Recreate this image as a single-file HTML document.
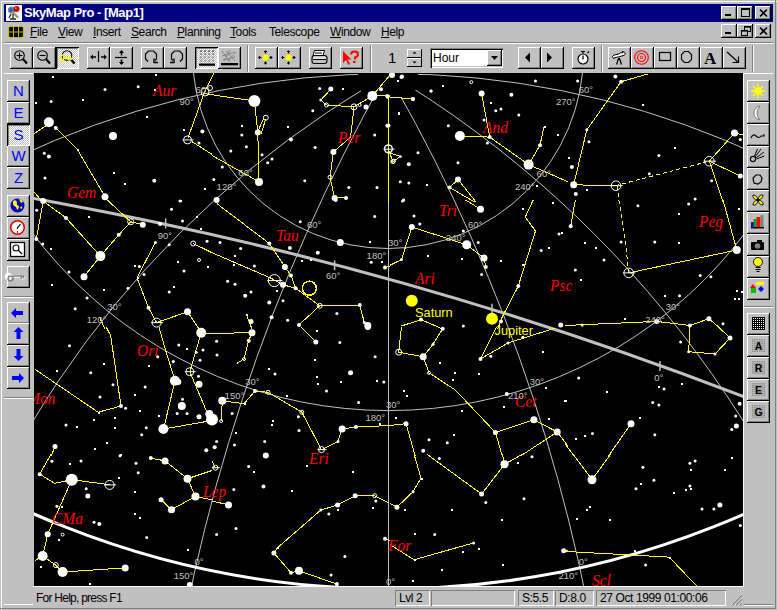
<!DOCTYPE html><html><head><meta charset="utf-8"><style>
*{margin:0;padding:0;box-sizing:border-box}
html,body{width:777px;height:610px;overflow:hidden;background:#c0c0c0;font-family:"Liberation Sans",sans-serif;font-size:12px;color:#000}
.a{position:absolute}
.b{position:absolute;width:23px;height:22px;background:#c0c0c0;box-shadow:inset -1px -1px #000,inset 1px 1px #fff,inset -2px -2px #808080}
.p{position:absolute;width:23px;height:22px;background-color:#c0c0c0;background-image:linear-gradient(45deg,#fff 25%,transparent 25%,transparent 75%,#fff 75%),linear-gradient(45deg,#fff 25%,transparent 25%,transparent 75%,#fff 75%);background-size:2px 2px;background-position:0 0,1px 1px;box-shadow:inset 1px 1px #000,inset -1px -1px #fff,inset 2px 2px #808080}
.tb{position:absolute;width:16px;height:14px;background:#c0c0c0;box-shadow:inset -1px -1px #000,inset 1px 1px #fff,inset -2px -2px #808080}
.m{position:absolute;top:25px;font-size:12px;line-height:15px;letter-spacing:-0.4px}
.u{text-decoration:underline}
.sp{position:absolute;top:590px;height:16px;box-shadow:inset 1px 1px #808080,inset -1px -1px #fff;padding:0 0 0 4px;font-size:12px;line-height:16px;letter-spacing:-0.4px}
svg{position:absolute;left:0;top:0}

</style></head><body>
<div class="a" style="left:1px;top:1px;width:776px;height:609px;border-top:1px solid #fff;border-left:1px solid #fff"></div>
<div class="a" style="left:4px;top:4px;width:769px;height:18px;background:#000080"></div>
<div class="a" style="left:24px;top:5px;color:#fff;font-weight:bold;font-size:13px;line-height:16px;letter-spacing:-0.45px">SkyMap Pro - [Map1]</div>
<div class="tb" style="left:721px;top:6px"></div>
<div class="tb" style="left:721px;top:24px"></div>
<div class="tb" style="left:737px;top:6px"></div>
<div class="tb" style="left:737px;top:24px"></div>
<div class="tb" style="left:755px;top:6px"></div>
<div class="tb" style="left:755px;top:24px"></div>
<div class="m" style="left:30px"><span class="u">F</span>ile</div>
<div class="m" style="left:58px"><span class="u">V</span>iew</div>
<div class="m" style="left:93px"><span class="u">I</span>nsert</div>
<div class="m" style="left:131px"><span class="u">S</span>earch</div>
<div class="m" style="left:177px"><span class="u">P</span>lanning</div>
<div class="m" style="left:230px"><span class="u">T</span>ools</div>
<div class="m" style="left:269px"><span class="u"></span>Telescope</div>
<div class="m" style="left:330px"><span class="u">W</span>indow</div>
<div class="m" style="left:381px"><span class="u">H</span>elp</div>
<div class="a" style="left:4px;top:42px;width:769px;height:1px;background:#808080"></div>
<div class="a" style="left:4px;top:43px;width:769px;height:1px;background:#fff"></div>
<div class="b" style="left:10px;top:47px"></div>
<div class="b" style="left:33px;top:47px"></div>
<div class="b" style="left:87px;top:47px"></div>
<div class="b" style="left:110px;top:47px"></div>
<div class="b" style="left:141px;top:47px"></div>
<div class="b" style="left:164px;top:47px"></div>
<div class="b" style="left:218px;top:47px"></div>
<div class="b" style="left:255px;top:47px"></div>
<div class="b" style="left:278px;top:47px"></div>
<div class="b" style="left:309px;top:47px"></div>
<div class="b" style="left:340px;top:47px"></div>
<div class="b" style="left:518px;top:47px"></div>
<div class="b" style="left:541px;top:47px"></div>
<div class="b" style="left:572px;top:47px"></div>
<div class="b" style="left:608px;top:47px"></div>
<div class="b" style="left:631px;top:47px"></div>
<div class="b" style="left:654px;top:47px"></div>
<div class="b" style="left:677px;top:47px"></div>
<div class="b" style="left:700px;top:47px"></div>
<div class="b" style="left:723px;top:47px"></div>
<div class="p" style="left:56px;top:47px"></div>
<div class="p" style="left:195px;top:47px"></div>
<div class="a" style="left:247px;top:45px;width:1px;height:27px;background:#808080"></div><div class="a" style="left:248px;top:45px;width:1px;height:27px;background:#fff"></div>
<div class="a" style="left:370px;top:45px;width:1px;height:27px;background:#808080"></div><div class="a" style="left:371px;top:45px;width:1px;height:27px;background:#fff"></div>
<div class="a" style="left:601px;top:45px;width:1px;height:27px;background:#808080"></div><div class="a" style="left:602px;top:45px;width:1px;height:27px;background:#fff"></div>
<div class="a" style="left:752px;top:45px;width:1px;height:27px;background:#808080"></div><div class="a" style="left:753px;top:45px;width:1px;height:27px;background:#fff"></div>
<div class="a" style="left:407px;top:49px;width:15px;height:9px;box-shadow:inset -1px -1px #000,inset 1px 1px #fff;background:#c0c0c0"></div>
<div class="a" style="left:407px;top:58px;width:15px;height:9px;box-shadow:inset -1px -1px #000,inset 1px 1px #fff;background:#c0c0c0"></div>
<div class="a" style="left:388px;top:50px;font-size:15px;line-height:16px;color:#000">1</div>
<div class="a" style="left:430px;top:48px;width:73px;height:20px;background:#fff;box-shadow:inset 1px 1px #808080,inset 2px 2px #000,inset -1px -1px #fff,inset -2px -2px #c0c0c0"></div>
<div class="a" style="left:487px;top:50px;width:15px;height:16px;background:#c0c0c0;box-shadow:inset -1px -1px #000,inset 1px 1px #fff,inset -2px -2px #808080"></div>
<div class="a" style="left:433px;top:51px;font-size:12px;line-height:14px">Hour</div>
<div class="a" style="left:4px;top:73px;width:29px;height:1px;background:#fff"></div>
<div class="a" style="left:743px;top:73px;width:30px;height:1px;background:#fff"></div>
<div class="b" style="left:7px;top:80px;font-size:15px;line-height:22px;text-align:center;color:#0000ff">N</div>
<div class="b" style="left:7px;top:102px;font-size:15px;line-height:22px;text-align:center;color:#0000ff">E</div>
<div class="b" style="left:7px;top:145px;font-size:15px;line-height:22px;text-align:center;color:#0000ff">W</div>
<div class="b" style="left:7px;top:167px;font-size:15px;line-height:22px;text-align:center;color:#0000ff">Z</div>
<div class="b" style="left:7px;top:195px;font-size:15px;line-height:22px;text-align:center;color:#0000ff"></div>
<div class="b" style="left:7px;top:217px;font-size:15px;line-height:22px;text-align:center;color:#0000ff"></div>
<div class="b" style="left:7px;top:239px;font-size:15px;line-height:22px;text-align:center;color:#0000ff"></div>
<div class="b" style="left:7px;top:266px;font-size:15px;line-height:22px;text-align:center;color:#0000ff"></div>
<div class="b" style="left:7px;top:302px;font-size:15px;line-height:22px;text-align:center;color:#0000ff"></div>
<div class="b" style="left:7px;top:323px;font-size:15px;line-height:22px;text-align:center;color:#0000ff"></div>
<div class="b" style="left:7px;top:345px;font-size:15px;line-height:22px;text-align:center;color:#0000ff"></div>
<div class="b" style="left:7px;top:367px;font-size:15px;line-height:22px;text-align:center;color:#0000ff"></div>
<div class="p" style="left:7px;top:124px;font-size:15px;line-height:22px;text-align:center;color:#0000ff">S</div>
<div class="b" style="left:747px;top:80px"></div>
<div class="b" style="left:747px;top:102px"></div>
<div class="b" style="left:747px;top:124px"></div>
<div class="b" style="left:747px;top:146px"></div>
<div class="b" style="left:747px;top:168px"></div>
<div class="b" style="left:747px;top:190px"></div>
<div class="b" style="left:747px;top:212px"></div>
<div class="b" style="left:747px;top:234px"></div>
<div class="b" style="left:747px;top:256px"></div>
<div class="b" style="left:747px;top:278px"></div>
<div class="b" style="left:747px;top:313px"></div>
<div class="b" style="left:747px;top:335px"></div>
<div class="b" style="left:747px;top:357px"></div>
<div class="b" style="left:747px;top:379px"></div>
<div class="b" style="left:747px;top:401px"></div>
<div class="a" style="left:4px;top:296px;width:29px;height:1px;background:#808080"></div><div class="a" style="left:4px;top:297px;width:29px;height:1px;background:#fff"></div>
<div class="a" style="left:4px;top:397px;width:29px;height:1px;background:#808080"></div><div class="a" style="left:4px;top:398px;width:29px;height:1px;background:#fff"></div>
<div class="a" style="left:744px;top:306px;width:29px;height:1px;background:#808080"></div><div class="a" style="left:744px;top:307px;width:29px;height:1px;background:#fff"></div>
<div class="a" style="left:4px;top:604px;width:29px;height:1px;background:#fff"></div>
<div class="a" style="left:744px;top:605px;width:29px;height:1px;background:#fff"></div>
<div class="a" style="left:34px;top:73px;width:709px;height:513px;background:#000;overflow:hidden">
<svg width="709" height="513" viewBox="34 73 709 513" style="position:static;display:block" font-family="Liberation Sans">
<g fill="none" stroke="#c0c0c0" stroke-width="1">
<clipPath id="cg1"><rect x="0" y="0" width="358" height="600"/><rect x="418" y="0" width="400" height="600"/></clipPath>
<circle cx="390.2" cy="949.8" r="876.1" clip-path="url(#cg1)"/>
<circle cx="388.0" cy="52.9" r="195.6"/>
<circle cx="388.7" cy="-35.8" r="446.4"/>
<clipPath id="cg2"><rect x="0" y="90" width="361" height="600"/></clipPath>
<clipPath id="cg3"><rect x="415" y="90" width="400" height="600"/></clipPath>
<circle cx="866.5" cy="920.8" r="971.8" clip-path="url(#cg2)"/>
<circle cx="-160.6" cy="988.1" r="1067.0" clip-path="url(#cg3)"/>
<clipPath id="cg6"><rect x="0" y="99" width="800" height="600"/></clipPath>
<circle cx="1967.1" cy="969.7" r="1816.6" clip-path="url(#cg6)"/>
<circle cx="-1115.2" cy="941.8" r="1735.8" clip-path="url(#cg6)"/>
<line x1="388.5" y1="149" x2="388.5" y2="590"/>
</g>
<circle cx="-635.3" cy="3965.9" r="3826.3" fill="none" stroke="#c0c0c0" stroke-width="3"/>
<line x1="165.7" y1="218.5" x2="165.7" y2="228.5" stroke="#c0c0c0" stroke-width="1.5"/>
<line x1="334.6" y1="260.3" x2="334.6" y2="270.3" stroke="#c0c0c0" stroke-width="1.5"/>
<line x1="492" y1="303.8" x2="492" y2="313.8" stroke="#c0c0c0" stroke-width="1.5"/>
<line x1="660" y1="361" x2="660" y2="371" stroke="#c0c0c0" stroke-width="1.5"/>
<circle cx="389.2" cy="-291.7" r="880.5" fill="none" stroke="#fff" stroke-width="3"/>
<g fill="none" stroke="#ffff00" stroke-width="1" shape-rendering="crispEdges">
<polyline points="34.0,133.7 45.5,126.0"/>
<polyline points="55.8,128.0 77.5,149.7 105.0,196.7"/>
<polyline points="187.8,138.3 204.0,93.6 213.8,73.0"/>
<polyline points="192.0,141.7 212.0,154.3"/>
<polyline points="34.0,192.0 41.0,200.0"/>
<polyline points="204.0,93.6 254.4,101.0 257.8,132.6 259.0,182.0"/>
<polyline points="261.0,134.0 265.8,118.8"/>
<polyline points="257.0,133.0 264.0,118.0"/>
<polyline points="212.0,155.5 259.0,181.8"/>
<polyline points="331.1,89.0 320.8,100.0 326.5,105.0 354.0,106.9 372.4,95.9"/>
<polyline points="372.4,95.9 390.0,95.9"/>
<polyline points="354.0,106.9 350.6,137.1 333.4,152.0 330.0,177.2 334.6,197.9 346.0,197.9"/>
<polyline points="388.4,95.0 388.4,202.0"/>
<polyline points="390.0,97.0 412.9,98.9"/>
<polyline points="459.9,136.0 489.7,137.1 481.6,93.6"/>
<polyline points="489.7,137.1 528.6,164.6 568.0,181.8"/>
<polyline points="528.6,164.6 540.0,145.2 544.0,126.8"/>
<polyline points="458.0,179.5 449.6,187.5 474.8,202.0"/>
<polyline points="458.0,179.5 476.0,202.0"/>
<polyline points="390.0,153.0 400.3,156.6"/>
<polyline points="647.5,74.1 621.1,81.7 586.8,129.8 573.7,184.8 615.4,185.7"/>
<polyline points="709.3,161.2 734.5,133.0 743.0,135.0"/>
<polyline points="709.3,161.2 740.3,176.0"/>
<polyline points="709.3,161.2 723.0,202.0"/>
<polyline points="43.2,201.1 36.3,239.0"/>
<polyline points="43.2,201.1 66.0,217.9 100.4,256.1 84.0,276.7"/>
<polyline points="100.4,256.1 118.8,234.8 130.7,221.8 107.3,200.0"/>
<polyline points="130.7,221.8 142.8,224.7"/>
<polyline points="155.4,242.4 137.0,277.9 148.5,307.7 156.6,322.6 187.5,311.8 199.0,329.0"/>
<polyline points="99.3,316.8 105.0,329.0"/>
<polyline points="193.2,243.5 212.0,252.7"/>
<polyline points="216.6,203.4 269.3,243.5 284.9,266.9 291.0,275.6 295.6,288.2 319.7,305.8 359.8,305.0 364.3,322.6 367.8,325.5"/>
<polyline points="319.7,305.8 299.0,324.9"/>
<polyline points="212.0,252.7 270.4,277.9 283.0,284.8 295.6,288.2"/>
<polyline points="246.4,314.5 252.0,329.0"/>
<polyline points="385.0,267.6 390.0,266.0"/>
<polyline points="411.8,227.0 466.7,244.7 484.0,258.0 485.8,266.9"/>
<polyline points="411.8,227.0 401.5,259.6 390.0,265.3"/>
<polyline points="465.6,200.0 480.5,209.2"/>
<polyline points="533.2,200.0 525.2,217.2 535.5,231.0 518.3,286.0 502.3,316.8 497.7,329.0"/>
<polyline points="401.5,326.0 421.0,319.6 442.7,329.0"/>
<polyline points="628.7,272.9 736.8,250.0 723.0,200.0"/>
<polyline points="575.3,200.0 570.7,226.3"/>
<polyline points="565.0,325.5 656.6,321.4 689.9,325.5 708.9,318.7 720.8,329.0"/>
<polyline points="106.2,327.0 110.7,335.7 121.0,406.0 98.1,412.2 35.1,369.4"/>
<polyline points="158.9,327.0 166.9,354.5 173.7,376.3 174.9,380.8 165.0,423.2 163.4,429.0 209.3,421.0"/>
<polyline points="201.2,332.7 189.8,371.7 205.8,409.5 209.3,414.0"/>
<polyline points="201.2,332.7 212.0,333.5"/>
<polyline points="55.0,446.6 51.2,456.0"/>
<polyline points="212.0,333.4 252.0,332.7 248.7,340.7 244.0,359.0 237.2,363.2"/>
<polyline points="222.3,400.8 244.0,403.7 255.0,391.0 268.1,392.3 301.8,412.2 321.5,449.6 338.0,441.5 342.1,429.0 355.9,427.1 390.0,425.5"/>
<polyline points="222.3,400.8 221.2,421.0"/>
<polyline points="301.3,327.0 315.8,341.9"/>
<polyline points="401.5,327.0 398.7,352.2 423.2,356.8 433.0,344.2 442.7,328.8"/>
<polyline points="423.2,356.8 429.0,372.8 455.3,390.0 495.4,432.4 502.3,456.0"/>
<polyline points="495.4,432.4 533.9,419.8 557.2,432.0 568.0,446.0"/>
<polyline points="557.2,432.0 520.6,456.0"/>
<polyline points="496.5,327.0 480.5,359.0 508.0,343.0 555.0,328.1"/>
<polyline points="390.0,425.5 406.0,423.7 415.2,456.0"/>
<polyline points="689.9,327.0 688.7,351.7 715.0,354.0 730.0,338.0 718.5,327.0"/>
<polyline points="631.0,423.7 608.5,456.0"/>
<polyline points="565.0,443.8 574.2,456.0"/>
<polyline points="51.2,454.0 39.7,474.2 54.6,483.3 71.8,479.7 102.7,483.8 109.6,484.9"/>
<polyline points="71.8,479.7 47.7,534.2 42.7,556.0 35.1,560.5"/>
<polyline points="42.7,556.0 55.8,565.1 62.6,572.0 125.2,567.9"/>
<polyline points="150.8,458.1 165.0,460.9 187.5,478.7 212.0,470.5"/>
<polyline points="187.5,478.7 195.5,496.4 212.0,499.8"/>
<polyline points="195.5,496.4 171.5,509.7 161.1,499.8"/>
<polyline points="212.0,461.0 215.4,467.7"/>
<polyline points="212.0,501.0 228.5,504.9"/>
<polyline points="389.5,503.3 374.7,495.7 355.2,495.7 337.5,504.9 320.8,510.1 277.3,547.9 273.9,553.0 291.0,572.7 299.0,570.8 336.9,584.1"/>
<polyline points="385.0,538.8 390.0,541.0"/>
<polyline points="414.0,454.0 421.0,478.0 413.0,491.8 396.9,507.2 390.0,503.3"/>
<polyline points="426.7,454.0 481.6,494.1 504.5,464.3 522.9,454.0"/>
<polyline points="504.5,464.3 502.3,454.0"/>
<polyline points="390.0,544.5 414.0,559.8 473.6,542.9"/>
<polyline points="563.7,550.7 568.0,551.0"/>
<polyline points="573.0,454.0 592.0,479.7 610.8,454.0"/>
<polyline points="565.0,551.4 669.2,557.1 696.7,586.0"/>
<polyline points="389.4,75.7 372.4,95.9"/>
<polyline points="387.6,96.8 412.8,99.1"/>
<polyline points="388.5,96.8 388.5,149.2 392.8,161.6 399.3,157.4"/>
<polyline points="615.4,185.7 709.3,161.2" stroke-dasharray="4,3"/>
<polyline points="617.7,186.0 618.8,200.0 624.6,234.4 628.0,266.4 628.7,272.9" stroke-dasharray="4,3"/>
<circle cx="309.4" cy="288.2" r="7.0" stroke-width="1.5"/>
</g>
<g fill="#fff">
<circle cx="48.9" cy="122.3" r="5.0"/>
<circle cx="55.8" cy="128.0" r="2.0"/>
<rect x="77" y="149" width="2" height="2"/>
<circle cx="105.0" cy="196.7" r="3.5"/>
<circle cx="113.0" cy="136.0" r="4.0"/>
<rect x="52" y="76" width="2" height="2"/>
<circle cx="105.0" cy="89.5" r="1.5"/>
<circle cx="138.2" cy="86.7" r="1.5"/>
<rect x="154" y="89" width="2" height="2"/>
<circle cx="51.2" cy="101.6" r="1.5"/>
<rect x="82" y="99" width="2" height="2"/>
<rect x="35" y="102" width="2" height="2"/>
<circle cx="44.3" cy="153.2" r="1.5"/>
<circle cx="48.9" cy="156.6" r="2.0"/>
<circle cx="45.0" cy="178.0" r="1.5"/>
<rect x="113" y="172" width="2" height="2"/>
<rect x="124" y="183" width="2" height="2"/>
<circle cx="154.3" cy="180.7" r="2.0"/>
<rect x="146" y="116" width="2" height="2"/>
<rect x="183" y="129" width="2" height="2"/>
<circle cx="199.0" cy="143.0" r="1.5"/>
<circle cx="202.4" cy="131.4" r="2.0"/>
<rect x="204" y="188" width="2" height="2"/>
<rect x="180" y="200" width="2" height="2"/>
<rect x="155" y="74" width="2" height="2"/>
<circle cx="254.4" cy="101.0" r="6.0"/>
<circle cx="257.8" cy="132.6" r="3.0"/>
<circle cx="259.0" cy="182.0" r="4.0"/>
<circle cx="291.0" cy="139.4" r="2.0"/>
<circle cx="241.8" cy="134.9" r="1.5"/>
<circle cx="246.4" cy="146.8" r="1.5"/>
<circle cx="230.8" cy="150.9" r="1.5"/>
<circle cx="262.0" cy="154.8" r="1.5"/>
<circle cx="272.0" cy="159.0" r="1.5"/>
<circle cx="267.7" cy="162.8" r="1.5"/>
<circle cx="222.3" cy="167.0" r="1.5"/>
<circle cx="213.8" cy="179.5" r="1.5"/>
<rect x="241" y="125" width="2" height="2"/>
<rect x="287" y="126" width="2" height="2"/>
<circle cx="312.8" cy="110.8" r="1.5"/>
<circle cx="315.1" cy="147.5" r="1.5"/>
<circle cx="304.8" cy="180.7" r="1.5"/>
<circle cx="374.7" cy="134.9" r="1.5"/>
<circle cx="377.0" cy="187.5" r="1.5"/>
<circle cx="348.8" cy="187.5" r="1.5"/>
<circle cx="319.7" cy="88.6" r="1.5"/>
<rect x="342" y="88" width="2" height="2"/>
<circle cx="216.6" cy="200.0" r="3.0"/>
<circle cx="331.1" cy="89.0" r="2.0"/>
<circle cx="372.4" cy="95.9" r="5.0"/>
<circle cx="387.3" cy="95.9" r="2.0"/>
<circle cx="333.4" cy="152.0" r="3.0"/>
<circle cx="334.6" cy="197.9" r="3.0"/>
<circle cx="346.0" cy="197.9" r="2.0"/>
<circle cx="366.0" cy="106.9" r="2.0"/>
<circle cx="320.8" cy="100.0" r="1.5"/>
<circle cx="387.3" cy="125.7" r="2.0"/>
<circle cx="412.9" cy="98.9" r="2.0"/>
<circle cx="459.9" cy="136.0" r="5.0"/>
<circle cx="489.7" cy="137.1" r="2.0"/>
<circle cx="481.6" cy="93.6" r="3.0"/>
<circle cx="528.6" cy="164.6" r="5.0"/>
<circle cx="540.0" cy="145.2" r="2.0"/>
<rect x="544" y="126" width="2" height="2"/>
<circle cx="401.5" cy="77.0" r="2.0"/>
<circle cx="431.2" cy="90.9" r="1.5"/>
<rect x="442" y="85" width="2" height="2"/>
<circle cx="535.5" cy="81.0" r="1.5"/>
<circle cx="511.4" cy="94.8" r="2.0"/>
<rect x="490" y="102" width="2" height="2"/>
<circle cx="495.8" cy="110.8" r="1.5"/>
<circle cx="501.0" cy="109.0" r="1.5"/>
<circle cx="518.8" cy="114.9" r="1.5"/>
<circle cx="484.0" cy="120.0" r="1.5"/>
<circle cx="448.4" cy="125.7" r="1.5"/>
<rect x="557" y="134" width="2" height="2"/>
<circle cx="418.0" cy="152.7" r="1.5"/>
<circle cx="408.8" cy="164.2" r="2.0"/>
<circle cx="458.0" cy="162.8" r="1.5"/>
<circle cx="487.4" cy="142.9" r="1.5"/>
<circle cx="400.3" cy="181.8" r="1.5"/>
<circle cx="408.8" cy="183.0" r="1.5"/>
<rect x="426" y="184" width="2" height="2"/>
<rect x="536" y="185" width="2" height="2"/>
<circle cx="403.7" cy="200.0" r="1.5"/>
<rect x="398" y="113" width="2" height="2"/>
<circle cx="458.0" cy="179.5" r="3.0"/>
<circle cx="449.6" cy="187.5" r="2.0"/>
<circle cx="400.3" cy="156.6" r="1.5"/>
<circle cx="621.1" cy="81.7" r="2.0"/>
<circle cx="586.8" cy="129.8" r="1.5"/>
<circle cx="573.7" cy="184.8" r="3.5"/>
<circle cx="615.4" cy="76.4" r="2.0"/>
<circle cx="734.5" cy="133.0" r="3.5"/>
<circle cx="740.3" cy="176.0" r="2.5"/>
<circle cx="577.6" cy="81.0" r="1.5"/>
<rect x="642" y="104" width="2" height="2"/>
<circle cx="589.0" cy="141.7" r="1.5"/>
<rect x="674" y="147" width="2" height="2"/>
<circle cx="658.9" cy="155.5" r="1.5"/>
<rect x="568" y="157" width="2" height="2"/>
<circle cx="571.9" cy="166.9" r="2.0"/>
<circle cx="649.3" cy="173.8" r="1.5"/>
<circle cx="575.8" cy="194.0" r="2.0"/>
<rect x="586" y="189" width="2" height="2"/>
<circle cx="711.6" cy="180.7" r="1.5"/>
<circle cx="695.1" cy="199.0" r="1.5"/>
<circle cx="740.3" cy="139.4" r="1.5"/>
<circle cx="43.2" cy="201.1" r="3.0"/>
<circle cx="36.3" cy="239.0" r="2.0"/>
<circle cx="66.0" cy="217.9" r="2.0"/>
<circle cx="100.4" cy="256.1" r="5.0"/>
<circle cx="84.0" cy="276.7" r="3.5"/>
<circle cx="118.8" cy="234.8" r="2.0"/>
<circle cx="142.8" cy="224.7" r="3.0"/>
<circle cx="155.4" cy="242.4" r="1.5"/>
<rect x="137" y="277" width="2" height="2"/>
<circle cx="148.5" cy="307.7" r="2.0"/>
<circle cx="187.5" cy="311.8" r="3.5"/>
<circle cx="36.7" cy="210.3" r="1.5"/>
<circle cx="42.7" cy="244.0" r="1.5"/>
<rect x="50" y="248" width="2" height="2"/>
<rect x="88" y="216" width="2" height="2"/>
<circle cx="69.0" cy="272.0" r="1.5"/>
<rect x="51" y="284" width="2" height="2"/>
<circle cx="87.0" cy="298.0" r="1.5"/>
<circle cx="75.2" cy="308.8" r="1.5"/>
<rect x="103" y="289" width="2" height="2"/>
<circle cx="128.0" cy="288.2" r="1.5"/>
<rect x="134" y="265" width="2" height="2"/>
<circle cx="139.4" cy="266.4" r="1.5"/>
<circle cx="144.0" cy="274.5" r="1.5"/>
<circle cx="169.2" cy="244.7" r="1.5"/>
<circle cx="171.5" cy="209.2" r="1.5"/>
<circle cx="180.0" cy="201.0" r="1.5"/>
<circle cx="182.5" cy="221.0" r="1.5"/>
<circle cx="160.0" cy="224.0" r="2.0"/>
<rect x="177" y="261" width="2" height="2"/>
<circle cx="184.0" cy="271.0" r="1.5"/>
<rect x="173" y="286" width="2" height="2"/>
<circle cx="169.2" cy="292.0" r="1.5"/>
<rect x="196" y="216" width="2" height="2"/>
<rect x="200" y="228" width="2" height="2"/>
<circle cx="207.0" cy="241.2" r="1.5"/>
<rect x="207" y="266" width="2" height="2"/>
<circle cx="269.3" cy="243.5" r="2.0"/>
<circle cx="284.9" cy="266.9" r="3.0"/>
<circle cx="291.0" cy="275.6" r="2.0"/>
<circle cx="295.6" cy="288.2" r="2.0"/>
<circle cx="359.8" cy="305.0" r="2.0"/>
<circle cx="364.3" cy="322.6" r="1.5"/>
<circle cx="367.8" cy="325.5" r="3.5"/>
<circle cx="299.0" cy="324.9" r="2.0"/>
<circle cx="283.0" cy="284.8" r="3.0"/>
<circle cx="300.2" cy="221.8" r="1.5"/>
<circle cx="374.7" cy="216.5" r="1.5"/>
<circle cx="340.3" cy="242.4" r="3.5"/>
<circle cx="317.8" cy="252.7" r="2.0"/>
<circle cx="289.9" cy="248.1" r="2.0"/>
<circle cx="220.0" cy="242.4" r="1.5"/>
<circle cx="240.6" cy="248.6" r="1.5"/>
<rect x="234" y="255" width="2" height="2"/>
<circle cx="254.4" cy="266.0" r="1.5"/>
<rect x="233" y="264" width="2" height="2"/>
<circle cx="227.6" cy="281.3" r="1.5"/>
<circle cx="235.0" cy="284.3" r="1.5"/>
<circle cx="251.0" cy="292.0" r="1.5"/>
<circle cx="245.2" cy="295.8" r="2.0"/>
<circle cx="269.3" cy="302.6" r="2.0"/>
<circle cx="283.0" cy="300.8" r="1.5"/>
<rect x="276" y="290" width="2" height="2"/>
<rect x="246" y="314" width="2" height="2"/>
<circle cx="251.0" cy="321.4" r="2.5"/>
<circle cx="271.6" cy="317.3" r="2.0"/>
<circle cx="287.6" cy="320.3" r="1.5"/>
<circle cx="336.9" cy="313.4" r="1.5"/>
<rect x="301" y="260" width="2" height="2"/>
<rect x="310" y="259" width="2" height="2"/>
<rect x="369" y="241" width="2" height="2"/>
<circle cx="385.0" cy="267.6" r="2.0"/>
<circle cx="371.2" cy="262.3" r="1.5"/>
<rect x="381" y="261" width="2" height="2"/>
<circle cx="335.7" cy="200.0" r="2.0"/>
<circle cx="411.8" cy="227.0" r="3.0"/>
<circle cx="466.7" cy="244.7" r="4.5"/>
<circle cx="484.0" cy="258.0" r="3.5"/>
<circle cx="485.8" cy="266.9" r="2.0"/>
<circle cx="401.5" cy="259.6" r="1.5"/>
<circle cx="480.5" cy="209.2" r="3.5"/>
<circle cx="518.3" cy="286.0" r="2.0"/>
<circle cx="421.0" cy="319.6" r="2.0"/>
<circle cx="402.6" cy="201.0" r="1.5"/>
<circle cx="414.0" cy="216.0" r="1.5"/>
<circle cx="419.8" cy="224.0" r="1.5"/>
<circle cx="463.3" cy="231.0" r="1.5"/>
<circle cx="478.2" cy="242.4" r="1.5"/>
<rect x="427" y="255" width="2" height="2"/>
<rect x="461" y="258" width="2" height="2"/>
<circle cx="481.6" cy="274.5" r="1.5"/>
<rect x="500" y="260" width="2" height="2"/>
<rect x="522" y="208" width="2" height="2"/>
<rect x="552" y="202" width="2" height="2"/>
<circle cx="559.0" cy="233.9" r="1.5"/>
<rect x="561" y="232" width="2" height="2"/>
<rect x="548" y="247" width="2" height="2"/>
<circle cx="541.2" cy="250.4" r="1.5"/>
<rect x="522" y="264" width="2" height="2"/>
<circle cx="463.3" cy="326.0" r="1.5"/>
<circle cx="560.7" cy="324.9" r="2.5"/>
<circle cx="501.0" cy="321.4" r="2.0"/>
<circle cx="736.8" cy="250.0" r="4.0"/>
<circle cx="570.7" cy="226.3" r="2.0"/>
<circle cx="656.6" cy="321.4" r="2.5"/>
<circle cx="689.9" cy="325.5" r="2.0"/>
<circle cx="708.9" cy="318.7" r="2.5"/>
<circle cx="637.9" cy="205.7" r="1.5"/>
<circle cx="688.7" cy="203.9" r="1.5"/>
<rect x="678" y="213" width="2" height="2"/>
<rect x="738" y="208" width="2" height="2"/>
<circle cx="621.1" cy="242.0" r="1.5"/>
<circle cx="654.8" cy="242.0" r="1.5"/>
<rect x="678" y="242" width="2" height="2"/>
<rect x="584" y="242" width="2" height="2"/>
<rect x="595" y="247" width="2" height="2"/>
<circle cx="604.0" cy="260.0" r="1.5"/>
<circle cx="575.3" cy="269.9" r="1.5"/>
<rect x="580" y="279" width="2" height="2"/>
<circle cx="700.2" cy="275.6" r="1.5"/>
<circle cx="710.9" cy="276.7" r="1.5"/>
<rect x="664" y="295" width="2" height="2"/>
<circle cx="679.5" cy="295.8" r="1.5"/>
<rect x="736" y="290" width="2" height="2"/>
<rect x="734" y="298" width="2" height="2"/>
<rect x="738" y="298" width="2" height="2"/>
<rect x="741" y="291" width="2" height="2"/>
<rect x="624" y="318" width="2" height="2"/>
<circle cx="582.2" cy="324.9" r="1.5"/>
<circle cx="723.0" cy="323.7" r="1.5"/>
<circle cx="121.0" cy="406.0" r="2.0"/>
<rect x="98" y="412" width="2" height="2"/>
<circle cx="174.9" cy="380.8" r="5.0"/>
<circle cx="163.4" cy="429.0" r="5.0"/>
<circle cx="212.0" cy="419.5" r="6.0"/>
<circle cx="201.2" cy="332.7" r="5.0"/>
<circle cx="209.3" cy="414.0" r="4.0"/>
<circle cx="69.5" cy="345.8" r="1.5"/>
<rect x="56" y="370" width="2" height="2"/>
<rect x="103" y="363" width="2" height="2"/>
<circle cx="90.8" cy="372.8" r="1.5"/>
<circle cx="113.0" cy="384.7" r="1.5"/>
<circle cx="100.0" cy="396.9" r="1.5"/>
<circle cx="145.1" cy="387.0" r="1.5"/>
<circle cx="157.7" cy="356.8" r="1.5"/>
<rect x="148" y="365" width="2" height="2"/>
<circle cx="173.3" cy="361.4" r="1.5"/>
<circle cx="178.8" cy="344.9" r="1.5"/>
<rect x="186" y="348" width="2" height="2"/>
<circle cx="196.2" cy="352.2" r="1.5"/>
<circle cx="203.0" cy="350.0" r="1.5"/>
<circle cx="200.0" cy="360.2" r="1.5"/>
<circle cx="198.5" cy="376.3" r="1.5"/>
<circle cx="199.0" cy="384.3" r="3.5"/>
<circle cx="181.8" cy="406.0" r="4.0"/>
<circle cx="177.2" cy="413.6" r="1.5"/>
<circle cx="187.0" cy="413.6" r="1.5"/>
<circle cx="199.0" cy="416.8" r="2.5"/>
<circle cx="182.5" cy="399.2" r="1.5"/>
<rect x="134" y="394" width="2" height="2"/>
<circle cx="125.6" cy="408.3" r="1.5"/>
<rect x="139" y="410" width="2" height="2"/>
<rect x="158" y="415" width="2" height="2"/>
<circle cx="146.3" cy="427.8" r="1.5"/>
<circle cx="141.7" cy="434.7" r="1.5"/>
<circle cx="66.0" cy="425.0" r="1.5"/>
<rect x="76" y="426" width="2" height="2"/>
<rect x="93" y="419" width="2" height="2"/>
<rect x="114" y="417" width="2" height="2"/>
<rect x="114" y="427" width="2" height="2"/>
<circle cx="55.0" cy="446.6" r="2.5"/>
<rect x="106" y="442" width="2" height="2"/>
<rect x="120" y="454" width="2" height="2"/>
<rect x="94" y="448" width="2" height="2"/>
<circle cx="206.3" cy="450.3" r="2.0"/>
<circle cx="178.3" cy="382.0" r="3.0"/>
<circle cx="252.0" cy="332.7" r="3.5"/>
<circle cx="248.7" cy="340.7" r="2.0"/>
<circle cx="222.3" cy="400.8" r="4.0"/>
<rect x="244" y="403" width="2" height="2"/>
<circle cx="255.0" cy="391.0" r="2.0"/>
<circle cx="342.1" cy="429.0" r="3.5"/>
<circle cx="355.9" cy="427.1" r="2.0"/>
<circle cx="338.0" cy="441.5" r="1.5"/>
<circle cx="315.8" cy="341.9" r="2.5"/>
<circle cx="367.8" cy="327.0" r="3.0"/>
<circle cx="216.6" cy="341.2" r="1.5"/>
<circle cx="217.0" cy="355.0" r="1.5"/>
<rect x="268" y="368" width="2" height="2"/>
<circle cx="275.0" cy="374.0" r="1.5"/>
<rect x="316" y="376" width="2" height="2"/>
<rect x="317" y="383" width="2" height="2"/>
<circle cx="326.5" cy="391.1" r="1.5"/>
<circle cx="339.8" cy="342.6" r="1.5"/>
<rect x="314" y="359" width="2" height="2"/>
<circle cx="375.1" cy="356.8" r="1.5"/>
<circle cx="350.6" cy="372.8" r="2.5"/>
<rect x="340" y="381" width="2" height="2"/>
<rect x="376" y="380" width="2" height="2"/>
<circle cx="383.8" cy="382.0" r="1.5"/>
<circle cx="358.6" cy="402.6" r="1.5"/>
<rect x="286" y="395" width="2" height="2"/>
<circle cx="298.4" cy="416.8" r="1.5"/>
<rect x="272" y="420" width="2" height="2"/>
<rect x="271" y="424" width="2" height="2"/>
<circle cx="299.0" cy="430.5" r="1.5"/>
<circle cx="232.2" cy="413.6" r="1.5"/>
<rect x="235" y="432" width="2" height="2"/>
<circle cx="234.5" cy="445.0" r="1.5"/>
<circle cx="264.7" cy="441.5" r="1.5"/>
<circle cx="216.6" cy="441.5" r="1.5"/>
<circle cx="214.7" cy="447.3" r="2.0"/>
<circle cx="265.8" cy="455.5" r="3.0"/>
<rect x="316" y="330" width="2" height="2"/>
<rect x="379" y="423" width="2" height="2"/>
<circle cx="423.2" cy="356.8" r="3.5"/>
<circle cx="442.7" cy="328.8" r="2.0"/>
<circle cx="433.0" cy="344.2" r="1.5"/>
<circle cx="495.4" cy="432.4" r="2.5"/>
<circle cx="533.9" cy="419.8" r="3.5"/>
<circle cx="557.2" cy="432.0" r="3.5"/>
<circle cx="480.5" cy="359.0" r="2.0"/>
<circle cx="508.0" cy="343.0" r="1.5"/>
<circle cx="406.0" cy="423.7" r="2.5"/>
<rect x="439" y="362" width="2" height="2"/>
<rect x="454" y="372" width="2" height="2"/>
<rect x="478" y="373" width="2" height="2"/>
<rect x="452" y="379" width="2" height="2"/>
<circle cx="490.8" cy="356.3" r="1.5"/>
<circle cx="522.9" cy="337.3" r="1.5"/>
<rect x="542" y="351" width="2" height="2"/>
<rect x="403" y="390" width="2" height="2"/>
<rect x="406" y="395" width="2" height="2"/>
<circle cx="506.8" cy="393.9" r="2.0"/>
<rect x="503" y="406" width="2" height="2"/>
<rect x="461" y="410" width="2" height="2"/>
<rect x="548" y="418" width="2" height="2"/>
<rect x="545" y="387" width="2" height="2"/>
<rect x="564" y="400" width="2" height="2"/>
<rect x="395" y="417" width="2" height="2"/>
<circle cx="429.0" cy="439.7" r="1.5"/>
<circle cx="447.3" cy="442.7" r="1.5"/>
<rect x="453" y="434" width="2" height="2"/>
<circle cx="423.2" cy="450.7" r="2.0"/>
<circle cx="688.7" cy="351.7" r="1.5"/>
<circle cx="715.0" cy="354.0" r="1.5"/>
<circle cx="730.0" cy="338.0" r="2.5"/>
<circle cx="680.7" cy="341.9" r="1.5"/>
<circle cx="578.7" cy="377.9" r="1.5"/>
<rect x="606" y="391" width="2" height="2"/>
<rect x="565" y="400" width="2" height="2"/>
<rect x="658" y="386" width="2" height="2"/>
<circle cx="664.0" cy="388.9" r="1.5"/>
<rect x="681" y="383" width="2" height="2"/>
<circle cx="652.7" cy="402.6" r="1.5"/>
<circle cx="658.9" cy="404.9" r="1.5"/>
<rect x="639" y="417" width="2" height="2"/>
<circle cx="631.0" cy="423.7" r="3.5"/>
<circle cx="592.5" cy="433.5" r="1.5"/>
<rect x="584" y="435" width="2" height="2"/>
<rect x="575" y="438" width="2" height="2"/>
<circle cx="654.8" cy="434.7" r="1.5"/>
<circle cx="739.6" cy="403.7" r="2.0"/>
<circle cx="735.7" cy="415.9" r="1.5"/>
<circle cx="736.4" cy="426.0" r="2.5"/>
<circle cx="731.8" cy="429.6" r="1.5"/>
<circle cx="39.7" cy="474.2" r="2.0"/>
<circle cx="71.8" cy="479.7" r="6.0"/>
<circle cx="47.7" cy="534.2" r="3.0"/>
<circle cx="42.7" cy="556.0" r="5.0"/>
<circle cx="62.6" cy="572.0" r="5.0"/>
<circle cx="125.2" cy="567.9" r="3.5"/>
<circle cx="150.8" cy="458.1" r="2.0"/>
<circle cx="165.0" cy="460.9" r="3.5"/>
<circle cx="187.5" cy="478.7" r="4.0"/>
<circle cx="195.5" cy="496.4" r="4.0"/>
<circle cx="171.5" cy="509.7" r="3.5"/>
<circle cx="161.1" cy="499.8" r="2.5"/>
<circle cx="51.9" cy="461.3" r="1.5"/>
<rect x="69" y="463" width="2" height="2"/>
<circle cx="81.0" cy="460.9" r="1.5"/>
<circle cx="120.0" cy="455.8" r="1.5"/>
<circle cx="136.0" cy="463.2" r="1.5"/>
<circle cx="138.2" cy="472.8" r="1.5"/>
<rect x="118" y="477" width="2" height="2"/>
<circle cx="86.2" cy="488.8" r="1.5"/>
<circle cx="87.8" cy="495.9" r="2.5"/>
<circle cx="56.9" cy="506.2" r="1.5"/>
<rect x="61" y="506" width="2" height="2"/>
<rect x="134" y="491" width="2" height="2"/>
<rect x="134" y="513" width="2" height="2"/>
<rect x="139" y="517" width="2" height="2"/>
<circle cx="94.0" cy="522.3" r="1.5"/>
<circle cx="99.3" cy="523.9" r="2.0"/>
<rect x="58" y="539" width="2" height="2"/>
<circle cx="146.7" cy="537.6" r="1.5"/>
<rect x="187" y="549" width="2" height="2"/>
<rect x="40" y="566" width="2" height="2"/>
<rect x="89" y="583" width="2" height="2"/>
<circle cx="189.8" cy="585.0" r="3.0"/>
<circle cx="228.5" cy="504.9" r="3.5"/>
<circle cx="355.2" cy="495.7" r="2.5"/>
<circle cx="337.5" cy="504.9" r="2.5"/>
<circle cx="320.8" cy="510.1" r="1.5"/>
<rect x="277" y="547" width="2" height="2"/>
<circle cx="273.9" cy="553.0" r="2.5"/>
<circle cx="291.0" cy="572.7" r="2.0"/>
<circle cx="299.0" cy="570.8" r="4.0"/>
<circle cx="336.9" cy="584.1" r="2.0"/>
<circle cx="248.7" cy="466.6" r="1.5"/>
<rect x="253" y="471" width="2" height="2"/>
<rect x="306" y="465" width="2" height="2"/>
<rect x="352" y="471" width="2" height="2"/>
<circle cx="233.8" cy="489.5" r="1.5"/>
<circle cx="263.5" cy="486.5" r="2.0"/>
<rect x="291" y="490" width="2" height="2"/>
<circle cx="375.8" cy="501.0" r="1.5"/>
<rect x="372" y="507" width="2" height="2"/>
<circle cx="328.8" cy="514.0" r="1.5"/>
<rect x="337" y="509" width="2" height="2"/>
<circle cx="236.0" cy="528.5" r="1.5"/>
<circle cx="216.6" cy="534.6" r="1.5"/>
<circle cx="344.9" cy="556.6" r="1.5"/>
<circle cx="331.1" cy="575.0" r="1.5"/>
<circle cx="385.0" cy="538.8" r="2.0"/>
<rect x="421" y="478" width="2" height="2"/>
<circle cx="413.0" cy="491.8" r="1.5"/>
<circle cx="396.9" cy="507.2" r="2.5"/>
<circle cx="481.6" cy="494.1" r="2.5"/>
<circle cx="504.5" cy="464.3" r="4.0"/>
<rect x="414" y="559" width="2" height="2"/>
<circle cx="473.6" cy="542.9" r="1.5"/>
<circle cx="439.3" cy="458.6" r="1.5"/>
<circle cx="532.0" cy="456.7" r="1.5"/>
<rect x="517" y="462" width="2" height="2"/>
<circle cx="485.8" cy="502.6" r="1.5"/>
<circle cx="524.0" cy="498.7" r="1.5"/>
<rect x="451" y="509" width="2" height="2"/>
<rect x="404" y="509" width="2" height="2"/>
<rect x="501" y="519" width="2" height="2"/>
<rect x="414" y="533" width="2" height="2"/>
<circle cx="434.7" cy="534.6" r="1.5"/>
<rect x="478" y="548" width="2" height="2"/>
<rect x="462" y="551" width="2" height="2"/>
<rect x="502" y="564" width="2" height="2"/>
<rect x="441" y="569" width="2" height="2"/>
<rect x="412" y="580" width="2" height="2"/>
<circle cx="563.7" cy="550.7" r="2.5"/>
<circle cx="592.0" cy="479.7" r="4.5"/>
<rect x="669" y="557" width="2" height="2"/>
<circle cx="642.9" cy="467.3" r="1.5"/>
<circle cx="689.9" cy="463.2" r="1.5"/>
<circle cx="695.1" cy="460.9" r="1.5"/>
<rect x="690" y="469" width="2" height="2"/>
<rect x="724" y="469" width="2" height="2"/>
<rect x="731" y="457" width="2" height="2"/>
<circle cx="653.9" cy="480.3" r="1.5"/>
<rect x="640" y="483" width="2" height="2"/>
<circle cx="636.0" cy="488.8" r="1.5"/>
<circle cx="689.9" cy="486.0" r="1.5"/>
<rect x="685" y="489" width="2" height="2"/>
<rect x="673" y="492" width="2" height="2"/>
<rect x="690" y="488" width="2" height="2"/>
<circle cx="719.9" cy="504.9" r="2.5"/>
<circle cx="713.9" cy="509.0" r="1.5"/>
<circle cx="702.0" cy="509.0" r="1.5"/>
<rect x="586" y="509" width="2" height="2"/>
<rect x="589" y="506" width="2" height="2"/>
<rect x="576" y="518" width="2" height="2"/>
<rect x="609" y="519" width="2" height="2"/>
<circle cx="740.3" cy="525.5" r="1.5"/>
<circle cx="645.6" cy="565.1" r="1.5"/>
<rect x="634" y="550" width="2" height="2"/>
<circle cx="392.0" cy="75.0" r="3.0"/>
<circle cx="402.0" cy="76.6" r="2.0"/>
<circle cx="387.6" cy="96.8" r="2.0"/>
<circle cx="412.8" cy="99.1" r="2.0"/>
<circle cx="330.8" cy="88.9" r="2.5"/>
<circle cx="366.0" cy="106.9" r="2.5"/>
<rect x="342" y="88" width="2" height="2"/>
<circle cx="430.8" cy="91.0" r="1.5"/>
<rect x="442" y="85" width="2" height="2"/>
<rect x="397" y="80" width="2" height="2"/>
<rect x="398" y="112" width="2" height="2"/>
<circle cx="381.0" cy="89.2" r="2.0"/>
<circle cx="388.5" cy="125.6" r="2.0"/>
</g>
<g fill="none" stroke="#fff" stroke-width="1">
<circle cx="265.8" cy="117.7" r="2.5"/>
<circle cx="326.5" cy="105.0" r="2.0"/>
<circle cx="354.0" cy="106.9" r="3.0"/>
<circle cx="330.0" cy="177.2" r="2.0"/>
<circle cx="388.4" cy="148.6" r="4.0"/>
<circle cx="471.3" cy="82.2" r="1.5"/>
<circle cx="393.4" cy="161.2" r="2.0"/>
<circle cx="130.7" cy="221.8" r="3.0"/>
<circle cx="193.2" cy="243.5" r="2.5"/>
<circle cx="199.0" cy="260.0" r="1.5"/>
<circle cx="319.7" cy="305.8" r="2.5"/>
<circle cx="244.0" cy="359.0" r="1.5"/>
<circle cx="268.1" cy="392.3" r="2.0"/>
<circle cx="301.8" cy="412.2" r="2.0"/>
<circle cx="221.2" cy="421.0" r="1.5"/>
<circle cx="398.7" cy="352.2" r="3.0"/>
<circle cx="429.0" cy="372.8" r="1.5"/>
<circle cx="62.6" cy="534.6" r="1.5"/>
<circle cx="55.8" cy="565.1" r="2.5"/>
<circle cx="374.7" cy="495.7" r="2.0"/>
<circle cx="392.8" cy="161.6" r="2.0"/>
<circle cx="359.6" cy="105.0" r="1.5"/>
<circle cx="205.0" cy="92.0" r="4.0"/>
<circle cx="210.0" cy="88.0" r="2.5"/>
<circle cx="156.6" cy="322.6" r="4.5"/><path d="M151.1,322.6h12.0"/>
<circle cx="274.3" cy="280.6" r="6.0"/><path d="M267.3,280.6h15.0"/>
<circle cx="189.8" cy="371.7" r="4.0"/><path d="M184.8,371.7h11.0"/>
<circle cx="321.5" cy="449.6" r="3.0"/><path d="M317.5,449.6h9.0"/>
<circle cx="109.6" cy="484.9" r="4.5"/><path d="M104.1,484.9h12.0"/>
<circle cx="388.5" cy="149.2" r="4.0"/><path d="M383.5,149.2h11.0"/>
<circle cx="187.5" cy="139.9" r="4.0"/><path d="M182.5,139.9h11.0"/>
<circle cx="616.0" cy="185.7" r="4.8"/><path d="M610.2,185.7h12.6"/>
<circle cx="709.3" cy="161.2" r="4.8"/><path d="M703.5,161.2h12.6"/>
<circle cx="628.7" cy="272.9" r="4.8"/><path d="M622.9000000000001,272.9h12.6"/>
<circle cx="215.4" cy="467.7" r="2.5"/><path d="M211.9,467.7h8.0"/>
</g>
<circle cx="411.8" cy="300.8" r="6.0" fill="#ffff00"/>
<circle cx="492.0" cy="318.7" r="6.0" fill="#ffff00"/>
<g fill="#ff0000" font-family="Liberation Serif" font-style="italic" font-size="15.5">
<text transform="translate(153,96) scale(1,1.14)">Aur</text>
<text transform="translate(67,198) scale(1,1.14)">Gem</text>
<text transform="translate(338,143) scale(1,1.14)">Per</text>
<text transform="translate(483,132.6) scale(1,1.14)">And</text>
<text transform="translate(699,226.8) scale(1,1.14)">Peg</text>
<text transform="translate(276,241) scale(1,1.14)">Tau</text>
<text transform="translate(439,216) scale(1,1.14)">Tri</text>
<text transform="translate(415,283.6) scale(1,1.14)">Ari</text>
<text transform="translate(550,290.5) scale(1,1.14)">Psc</text>
<text transform="translate(137,355.6) scale(1,1.14)">Ori</text>
<text transform="translate(27,403.7) scale(1,1.14)">Mon</text>
<text transform="translate(515,407) scale(1,1.14)">Cet</text>
<text transform="translate(309,464.3) scale(1,1.14)">Eri</text>
<text transform="translate(203,496.8) scale(1,1.14)">Lep</text>
<text transform="translate(52,523.9) scale(1,1.14)">CMa</text>
<text transform="translate(388,551.4) scale(1,1.14)">For</text>
<text transform="translate(592,586) scale(1,1.14)">Scl</text>
</g>
<g fill="#c0c0c0" font-size="9.5">
<text x="179.5" y="105">90°</text>
<text x="195.5" y="93">60°</text>
<text x="238.3" y="176">60°</text>
<text x="216.6" y="189.8">120°</text>
<text x="536.6" y="177.2">60°</text>
<text x="514.9" y="189.8">240°</text>
<text x="556" y="105">270°</text>
<text x="578.7" y="92.5">60°</text>
<text x="157.7" y="238.5">90°</text>
<text x="107.3" y="309.5">30°</text>
<text x="86.7" y="322.6">120°</text>
<text x="307" y="228.2">60°</text>
<text x="366.6" y="259">180°</text>
<text x="325.9" y="279">60°</text>
<text x="388" y="246">30°</text>
<text x="468" y="228">60°</text>
<text x="446" y="241.2">240°</text>
<text x="665.8" y="309.5">30°</text>
<text x="645.2" y="322.6">240°</text>
<text x="245.2" y="385.4">30°</text>
<text x="224.6" y="398.5">150°</text>
<text x="365.5" y="421.4">180°</text>
<text x="529.7" y="385.4">30°</text>
<text x="508" y="399.2">210°</text>
<text x="386" y="408.3">30°</text>
<text x="654.3" y="380.8">0°</text>
<text x="194.4" y="565">0°</text>
<text x="173.7" y="578.9">150°</text>
<text x="386" y="584.6">0°</text>
<text x="558.4" y="578.9">210°</text>
<text x="578.7" y="565">0°</text>
</g>
<g fill="#ffff00" font-size="12.8">
<text x="415" y="317">Saturn</text><text x="494.5" y="334.5">Jupiter</text>
</g>
</svg></div>
<div class="a" style="left:33px;top:586px;width:711px;height:1px;background:#fff"></div>
<div class="a" style="left:743px;top:73px;width:1px;height:514px;background:#fff"></div>
<div class="a" style="left:775px;top:0px;width:1px;height:609px;background:#808080"></div>
<div class="a" style="left:0px;top:608px;width:776px;height:1px;background:#808080"></div>
<div class="a" style="left:744px;top:604px;width:29px;height:1px;background:#808080"></div>
<div class="a" style="left:36px;top:591px;font-size:12px;line-height:15px;letter-spacing:-0.75px">For Help, press F1</div>
<div class="sp" style="left:395px;width:35px">Lvl 2</div>
<div class="sp" style="left:431px;width:84px"></div>
<div class="sp" style="left:518px;width:36px">S:5.5</div>
<div class="sp" style="left:555px;width:39px">D:8.0</div>
<div class="sp" style="left:596px;width:130px">27 Oct 1999 01:00:06</div>
<svg width="777" height="610"><path d="M731,605l11,-11M735,605l7,-7M739,605l3,-3" stroke="#fff" stroke-width="1"/><path d="M732,605l10,-10M736,605l6,-6M740,605l2,-2" stroke="#808080" stroke-width="1.2"/></svg>
<svg width="777" height="610" style="pointer-events:none">
<rect x="6" y="5" width="16" height="16" fill="#fff"/>
<circle cx="11.5" cy="10" r="3.6" fill="#808080"/><circle cx="11" cy="10" r="1.8" fill="#0060ff"/>
<circle cx="16.5" cy="9" r="3" fill="#d00000"/><circle cx="15.8" cy="8.2" r="0.9" fill="#ff8080"/>
<path d="M12,13 L14,12 L19,17 L17.5,18.5Z" fill="#909090"/><path d="M13,14v5M10,19h6M11,14l-2,4" stroke="#202020" stroke-width="1.3" fill="none"/>
<rect x="8.5" y="26.5" width="15" height="11" rx="2" fill="#000" stroke="#c0c000" stroke-width="1.2"/>
<path d="M8,32h16M13.5,26v12M18.5,26v12" stroke="#c0c000" stroke-width="1"/>
<rect x="725" y="14" width="6" height="2" fill="#000"/>
<path d="M760,9.5l7,7M767,9.5l-7,7" stroke="#000" stroke-width="1.6"/>
<rect x="725" y="32" width="6" height="2" fill="#000"/>
<path d="M760,27.5l7,7M767,27.5l-7,7" stroke="#000" stroke-width="1.6"/>
<rect x="741.5" y="8.5" width="8" height="8" fill="none" stroke="#000"/><rect x="741" y="8" width="9" height="2" fill="#000"/>
<rect x="744.5" y="26.5" width="6" height="5" fill="#c0c0c0" stroke="#000"/><rect x="744" y="26" width="7" height="1.6" fill="#000"/>
<rect x="741.5" y="30.5" width="6" height="5" fill="#c0c0c0" stroke="#000"/><rect x="741" y="30" width="7" height="1.6" fill="#000"/>
<circle cx="19.5" cy="55.5" r="4.8" fill="none" stroke="#000" stroke-width="1.1"/>
<path d="M23.0,59.0l4,4.5" stroke="#000" stroke-width="2.2"/>
<path d="M16.5,55.5h6" stroke="#000" stroke-width="1.1"/>
<path d="M19.5,52.5v6" stroke="#000" stroke-width="1.1"/>
<circle cx="42.5" cy="55.5" r="4.8" fill="none" stroke="#000" stroke-width="1.1"/>
<path d="M46.0,59.0l4,4.5" stroke="#000" stroke-width="2.2"/>
<path d="M39.5,55.5h6" stroke="#000" stroke-width="1.1"/>
<circle cx="67" cy="55.5" r="4.8" fill="none" stroke="#000" stroke-width="1.1"/><path d="M70.5,59l4,4.5" stroke="#000" stroke-width="2.2"/>
<ellipse cx="62" cy="58" rx="1.8" ry="3" fill="none" stroke="#ffff00" stroke-width="1.3"/><path d="M63.5,58h8M69,58v2.5M71,58v2" stroke="#ffff00" stroke-width="1.8"/>
<path d="M98.5,51v11" stroke="#000" stroke-width="1.2"/><path d="M91,57h5M101,57h5" stroke="#000" stroke-width="1.6"/>
<path d="M90,57l3,-2.5v5z M107,57l-3,-2.5v5z" fill="#000"/>
<path d="M115,57.5h12" stroke="#000" stroke-width="1.2"/><path d="M121.5,51v4.5M121.5,59.5v4.5" stroke="#000" stroke-width="1.6"/>
<path d="M121.5,50l-2.5,3h5z M121.5,65l-2.5,-3h5z" fill="#000"/>
<path d="M148,61.5l-2.5,-2.5v-5l3,-3h5l3,3v5l-1.5,1.5" fill="none" stroke="#000" stroke-width="1.2"/><path d="M154,58.5v4h4" fill="none" stroke="#000" stroke-width="1.3"/>
<path d="M180,61.5l2.5,-2.5v-5l-3,-3h-5l-3,3v5l1.5,1.5" fill="none" stroke="#000" stroke-width="1.2"/><path d="M174,58.5v4h-4" fill="none" stroke="#000" stroke-width="1.3"/>
<g stroke="#808080" stroke-width="1" fill="none">
<path d="M200,50.0l2,2M202,50.0l-2,2"/>
<path d="M200,53.2l2,2M202,53.2l-2,2"/>
<path d="M200,56.4l2,2M202,56.4l-2,2"/>
<path d="M200,59.6l2,2M202,59.6l-2,2"/>
<path d="M204,50.0l2,2M206,50.0l-2,2"/>
<path d="M204,53.2l2,2M206,53.2l-2,2"/>
<path d="M204,56.4l2,2M206,56.4l-2,2"/>
<path d="M204,59.6l2,2M206,59.6l-2,2"/>
<path d="M208,50.0l2,2M210,50.0l-2,2"/>
<path d="M208,53.2l2,2M210,53.2l-2,2"/>
<path d="M208,56.4l2,2M210,56.4l-2,2"/>
<path d="M208,59.6l2,2M210,59.6l-2,2"/>
<path d="M212,50.0l2,2M214,50.0l-2,2"/>
<path d="M212,53.2l2,2M214,53.2l-2,2"/>
<path d="M212,56.4l2,2M214,56.4l-2,2"/>
<path d="M212,59.6l2,2M214,59.6l-2,2"/>
</g><rect x="199" y="63.5" width="16" height="2.3" fill="#000"/>
<path d="M222,51l8,11M226,51l9,10M230,50l-6,11M236,52l-8,9M222,56l13,-4M223,60l12,-3" stroke="#808080" stroke-width="0.9" fill="none"/><rect x="221" y="63" width="17" height="2.3" fill="#000"/>
<circle cx="265.5" cy="57.5" r="3" fill="#ffff00"/>
<path d="M265.5,50.5v3M265.5,61.5v3M258.5,57.5h3M269.5,57.5h3" stroke="#000" stroke-width="1.2"/>
<path d="M264.0,51.5h3M264.0,63.0h3M259.5,56.0v3M271.0,56.0v3" stroke="#000" stroke-width="1.2"/>
<circle cx="288.5" cy="57.5" r="3" fill="#ffff00"/>
<path d="M288.5,50.5v3M288.5,61.5v3M281.5,57.5h3M292.5,57.5h3" stroke="#000" stroke-width="1.2"/>
<path d="M287.0,51.5h3M287.0,63.0h3M282.5,56.0v3M294.0,56.0v3" stroke="#000" stroke-width="1.2"/>
<path d="M314.5,50.5h10l-1.5,5h-10z" fill="#fff" stroke="#000"/><path d="M315,53h7" stroke="#000"/>
<rect x="312" y="55.5" width="15" height="8" rx="2.5" fill="#c0c0c0" stroke="#000" stroke-width="1.1"/><path d="M313,59.5h13" stroke="#000"/><path d="M313,58h13" stroke="#fff"/>
<path d="M343,51v12l3,-3l2.5,5l1.5,-1l-2.5,-4.5h4z" fill="#ff0000"/>
<path d="M351,54.5q0,-3 3.5,-3q3.5,0 3.5,3q0,2 -3,3v2" fill="none" stroke="#ff0000" stroke-width="2"/><rect x="353" y="61" width="2.5" height="2" fill="#ff0000"/>
<path d="M414.5,51.5l-2,2h4z M414.5,63.5l-2,-2h4z" fill="#000"/>
<path d="M491,56h7l-3.5,4z" fill="#000"/>
<path d="M525,57.5l5,-5v10z" fill="#000"/><path d="M552,57.5l-5,-5v10z" fill="#000"/>
<circle cx="583" cy="59" r="5" fill="#fff" stroke="#000" stroke-width="1.2"/><path d="M583,55.5v4" stroke="#000" stroke-width="1.3"/><path d="M581,51.5h4M583,51.5v2M587.5,53l1.5,-1.5" stroke="#000" stroke-width="1.2"/>
<path d="M612.5,56.5l1.5,-1.5l5,-1l1.5,-1.2l2.5,0l-0.8,-1.3l2.3,0.8l1,1.7l-1.5,1.3l-4,1.2l-5,1.2l-1.5,0.8z" fill="#fff" stroke="#000" stroke-width="1"/><rect x="618" y="58" width="2" height="2" fill="#000"/><path d="M618,59.5l-1.3,5M620,59.5l1.3,5" stroke="#000" stroke-width="1.3"/>
<circle cx="641.5" cy="57.5" r="6.8" fill="none" stroke="#ff0000" stroke-width="1.1"/><circle cx="641.5" cy="57.5" r="4" fill="none" stroke="#ff0000" stroke-width="1.1"/><circle cx="641.5" cy="57.5" r="1.2" fill="none" stroke="#ff0000" stroke-width="0.9"/>
<rect x="659.5" y="52.5" width="11" height="8" fill="none" stroke="#000" stroke-width="1.2"/>
<path d="M684.5,51.5h4l3,3v5l-3,3h-4l-3,-3v-5z" fill="none" stroke="#000" stroke-width="1.1"/>
<text x="704" y="64" font-family="Liberation Serif" font-weight="bold" font-size="17">A</text>
<path d="M727,52l11,10" stroke="#000" stroke-width="1.2"/><path d="M738.5,56.5v6h-6" fill="none" stroke="#000" stroke-width="1.2"/>
<circle cx="17.5" cy="205.5" r="7" fill="#0000c0"/><path d="M13,201q3,-2 4,1q-1,3 2,4q0,3 -2,4l-1,-3q-3,-1 -3,-3z M19,199q3,0 4,3l-2,1z M21,206q2,1 1,3l-2,-1z" fill="#ffff00"/>
<circle cx="17.5" cy="227.5" r="6.8" fill="#fff" stroke="#e00000" stroke-width="1.6"/><path d="M17.5,229v-1l3,-4" stroke="#000" stroke-width="1.2" fill="none"/><path d="M17.5,231v2" stroke="#e00000" stroke-width="1"/>
<rect x="10.5" y="242.5" width="14" height="14" fill="#fff" stroke="#000" stroke-width="1.3"/><circle cx="16" cy="248" r="3" fill="none" stroke="#000" stroke-width="1.1"/><path d="M18,250l4,4" stroke="#000" stroke-width="1.3"/>
<path d="M11,276.5a2.5,2.5 0 1,0 0,0.1M14,276.5h11M22,276.5v3M24,276.5v2" fill="none" stroke="#fff" stroke-width="2.5"/>
<path d="M10.5,276a2.5,2.5 0 1,0 0.1,0M13.5,276h11M21.5,276v3M23.5,276v2" fill="none" stroke="#808080" stroke-width="1.6"/>
<path d="M11,313l5,-5v3h7v4h-7v3z" fill="#0000ff"/>
<path d="M18.5,327l5,5h-3v7h-4v-7h-3z" fill="#0000ff"/>
<path d="M18.5,361l5,-5h-3v-7h-4v7h-3z" fill="#0000ff"/>
<path d="M24,378l-5,-5v3h-7v4h7v3z" fill="#0000ff"/>
<g stroke="#ffff00" stroke-width="1.4"><path d="M751,91h14M758,84v14M753,86l10,10M763,86l-10,10"/></g><circle cx="758" cy="91" r="3.8" fill="#ffff00"/>
<path d="M760,106q-6,1.5 -6,7q0,5.5 6,7q-3,-3 -3,-7q0,-4 3,-7z" fill="#fff" stroke="#606060" stroke-width="0.8"/>
<path d="M751,138q2,-5 5,-2q3,3 5,0h3v-2" fill="none" stroke="#000" stroke-width="1.1"/>
<circle cx="753" cy="159" r="2.6" fill="none" stroke="#000" stroke-width="1.1"/><path d="M755,157l6,-8M756,158l8,-6M754.5,156l3,-7M756.5,159l8,-3" stroke="#000" stroke-width="1"/>
<path d="M753,178l3,-3h4l2,3l-1,4l-3,2l-4,-1z" fill="none" stroke="#000" stroke-width="1.2"/>
<path d="M758,200q-6,-1 -5,-5q4,0 5,5q1,-6 5,-5q0,4 -5,5q6,1 5,5q-4,0 -5,-5q-1,6 -5,5q0,-4 5,-5z" fill="#ffff00" stroke="#000" stroke-width="0.9"/>
<rect x="751" y="222" width="3" height="6" fill="#0000ff"/><rect x="753.5" y="219" width="3" height="9" fill="#00a000"/><rect x="756.5" y="217" width="4" height="11" fill="#ff0000"/><rect x="760.5" y="215" width="3" height="13" fill="#808080"/><rect x="751" y="227" width="13" height="1.5" fill="#000"/>
<rect x="751" y="242" width="13" height="8" rx="1" fill="#000"/><rect x="757" y="240" width="5" height="3" fill="#000"/><circle cx="757.5" cy="246" r="2.8" fill="#808080"/>
<circle cx="758" cy="262" r="4.5" fill="#ffff00" stroke="#000" stroke-width="0.9"/><path d="M755.5,267.5h5M755.5,269.5h5M756.5,271.5h3" stroke="#000" stroke-width="1"/>
<path d="M750,288l3,-4l3,4z" fill="#ff0000"/><rect x="756" y="282" width="8" height="3" fill="#ffff00"/><rect x="751" y="288" width="5" height="5" fill="#00c000"/><path d="M761,286l3,3l-3,3l-3,-3z" fill="#0000ff"/>
<rect x="752" y="317" width="13" height="13" fill="#fff"/><g stroke="#000" stroke-width="1">
<path d="M752.5,317v13M752,317.5h13"/>
<path d="M754.5,317v13M752,319.5h13"/>
<path d="M756.5,317v13M752,321.5h13"/>
<path d="M758.5,317v13M752,323.5h13"/>
<path d="M760.5,317v13M752,325.5h13"/>
<path d="M762.5,317v13M752,327.5h13"/>
<path d="M764.5,317v13M752,329.5h13"/>
</g>
<rect x="752" y="339" width="13" height="13" fill="#b0b0b0"/>
<g stroke="#808080" stroke-width="0.8" stroke-dasharray="1,1"><path d="M752.5,339v13"/><path d="M754.9,339v13"/><path d="M757.3,339v13"/><path d="M759.7,339v13"/><path d="M762.1,339v13"/><path d="M764.5,339v13"/></g>
<text x="758.5" y="349.5" font-weight="bold" font-size="10.5" text-anchor="middle" font-family="Liberation Sans">A</text>
<rect x="752" y="361" width="13" height="13" fill="#b0b0b0"/>
<g stroke="#808080" stroke-width="0.8" stroke-dasharray="1,1"><path d="M752.5,361v13"/><path d="M754.9,361v13"/><path d="M757.3,361v13"/><path d="M759.7,361v13"/><path d="M762.1,361v13"/><path d="M764.5,361v13"/></g>
<text x="758.5" y="371.5" font-weight="bold" font-size="10.5" text-anchor="middle" font-family="Liberation Sans">R</text>
<rect x="752" y="383" width="13" height="13" fill="#b0b0b0"/>
<g stroke="#808080" stroke-width="0.8" stroke-dasharray="1,1"><path d="M752.5,383v13"/><path d="M754.9,383v13"/><path d="M757.3,383v13"/><path d="M759.7,383v13"/><path d="M762.1,383v13"/><path d="M764.5,383v13"/></g>
<text x="758.5" y="393.5" font-weight="bold" font-size="10.5" text-anchor="middle" font-family="Liberation Sans">E</text>
<rect x="752" y="405" width="13" height="13" fill="#b0b0b0"/>
<g stroke="#808080" stroke-width="0.8" stroke-dasharray="1,1"><path d="M752.5,405v13"/><path d="M754.9,405v13"/><path d="M757.3,405v13"/><path d="M759.7,405v13"/><path d="M762.1,405v13"/><path d="M764.5,405v13"/></g>
<text x="758.5" y="415.5" font-weight="bold" font-size="10.5" text-anchor="middle" font-family="Liberation Sans">G</text>
</svg>
</body></html>
